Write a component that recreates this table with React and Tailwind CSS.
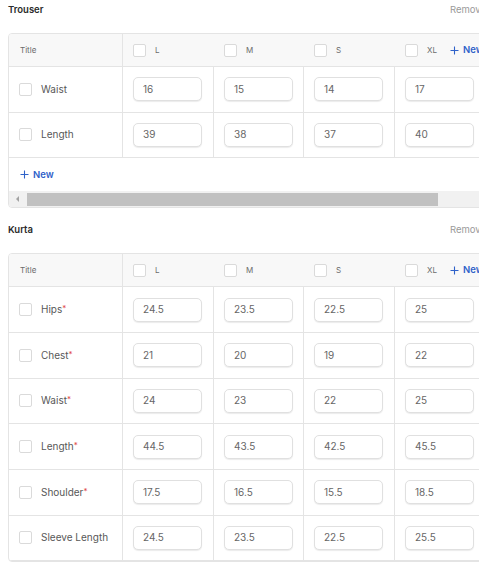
import React from 'react'

const cols = [
    { key: 'L', w: 'w-[91px]' },
    { key: 'M', w: 'w-[90px]' },
    { key: 'S', w: 'w-[91px]' },
    { key: 'XL', w: 'w-[91px]' },
]

const trouser = [
    { name: 'Waist', values: ['16', '15', '14', '17'] },
    { name: 'Length', values: ['39', '38', '37', '40'] },
]

const kurta = [
    { name: 'Hips', req: true, values: ['24.5', '23.5', '22.5', '25'] },
    { name: 'Chest', req: true, values: ['21', '20', '19', '22'] },
    { name: 'Waist', req: true, values: ['24', '23', '22', '25'] },
    { name: 'Length', req: true, values: ['44.5', '43.5', '42.5', '45.5'] },
    { name: 'Shoulder', req: true, values: ['17.5', '16.5', '15.5', '18.5'] },
    { name: 'Sleeve Length', values: ['24.5', '23.5', '22.5', '25.5'] },
]

const Box = () => (
    <span className='block w-[13px] h-[13px] shrink-0 rounded-[2px] border border-[#dadada] bg-white'></span>
)

const Plus = () => (
    <svg width="9" height="9" viewBox="0 0 9 9" className='shrink-0'>
        <path d="M4.5 0.5v8M0.5 4.5h8" stroke="#2f62c9" strokeWidth="1.1" />
    </svg>
)

const NewBtn = () => (
    <span className='flex items-center gap-[4px] text-[9.5px] font-semibold text-[#2f62c9]'>
        <Plus />New
    </span>
)

const SizeTable = ({ title, rows, footer }) => {
    return (
        <div className='mb-[12px]'>
            {/* header runs past the window, so Remove gets clipped like in the design */}
            <div className='flex h-[20px] w-[486px] items-center justify-between pl-2'>
                <span className='text-[9.5px] font-semibold text-[#2b2b2b]'>{title}</span>
                <span className='text-[9.5px] text-[#9a9a9a]'>Remove</span>
            </div>

            <div className='ml-2 mt-[13px] w-[560px] overflow-hidden rounded-[4px] border border-[#e4e4e4]'>
                {/* header */}
                <div className='flex h-[33px] border-b border-[#e4e4e4] bg-[#f8f8f8]'>
                    <div className='flex w-[114px] items-center border-r border-[#e4e4e4] pl-[11px] text-[8px] text-[#6b6b6b]'>Title</div>
                    {cols.map((c) => (
                        <div key={c.key} className={`${c.w} flex items-center gap-[9px] pl-[10px] text-[8px] text-[#6b6b6b]`}>
                            <Box />
                            <span>{c.key}</span>
                            {c.key === 'XL' && <span className='ml-[4px]'><NewBtn /></span>}
                        </div>
                    ))}
                </div>

                {rows.map((r) => (
                    <div key={r.name} className='flex h-[45.67px] border-b border-[#e4e4e4]'>
                        <div className='flex w-[114px] items-center gap-[9px] border-r border-[#e4e4e4] pl-[10px] text-[10px] text-[#585858]'>
                            <Box />
                            <span>
                                {r.name}
                                {r.req && <span className='relative top-[-2px] text-[8px] text-[#e04848]'>*</span>}
                            </span>
                        </div>
                        {cols.map((c, j) => (
                            <div key={c.key} className={`${c.w} flex items-center border-r border-[#e4e4e4] pl-[10px]`}>
                                <div className='flex h-[24px] w-[69px] items-center rounded-[5px] border border-[#e0e0e0] bg-white pl-[9px] text-[10px] text-[#666] shadow-[0_1px_1px_rgba(0,0,0,0.08)]'>
                                    {r.values[j]}
                                </div>
                            </div>
                        ))}
                        <div className='flex-1'></div>
                    </div>
                ))}

                {footer && (
                    <>
                        <div className='flex h-[33px] items-center pl-[11px]'>
                            <NewBtn />
                        </div>
                        <div className='flex h-[16px] items-center bg-[#f1f1f1]'>
                            <svg width="18" height="16" viewBox="0 0 18 16" className='shrink-0'>
                                <path d="M7 8l3-3v6z" fill="#a3a3a3" />
                            </svg>
                            <div className='h-[13px] w-[411px] bg-[#c1c1c1]'></div>
                        </div>
                    </>
                )}
            </div>
        </div>
    )
}

export default function App() {
    return (
        <div className="h-[564px] w-[479px] overflow-hidden bg-white font-['Inter',sans-serif]">
            <SizeTable title='Trouser' rows={trouser} footer />
            <SizeTable title='Kurta' rows={kurta} />
        </div>
    )
}
